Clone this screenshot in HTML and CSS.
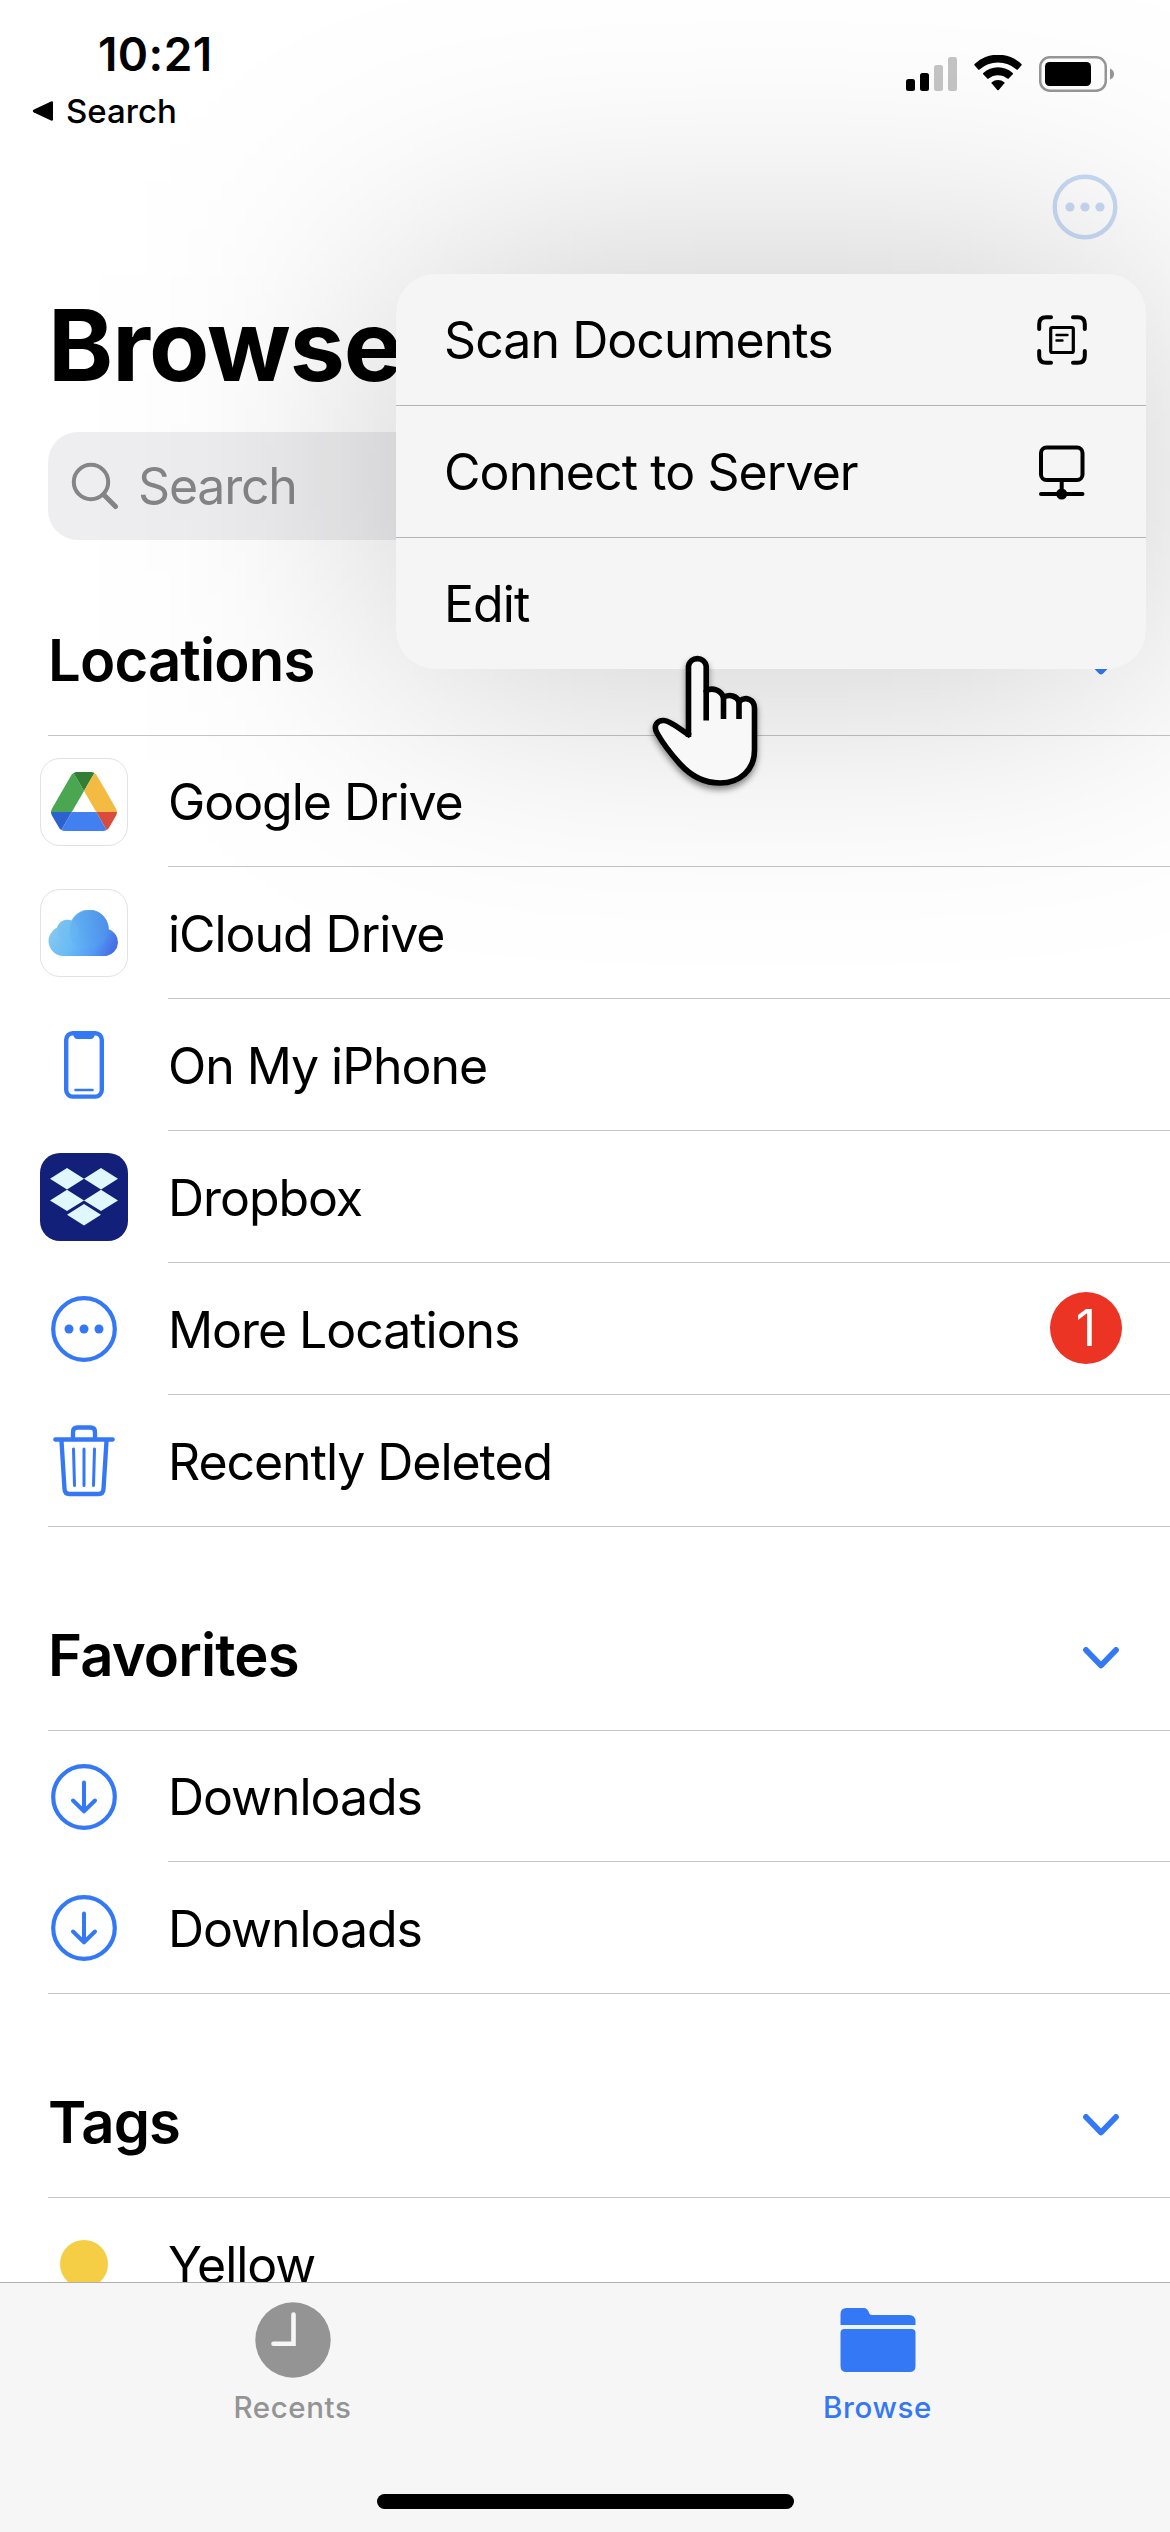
FILE: index.html
```html
<!DOCTYPE html>
<html lang="en">
<head>
<meta charset="UTF-8" />
<meta name="viewport" content="width=device-width, initial-scale=1.0" />
<title>Files - Browse</title>
<link rel="stylesheet" href="styles.css">
</head>
<body>

<div class="screen">
  <header class="status">
    <div class="status-left">
      <div class="time">10:21</div>
      <div class="back">
        <svg width="22" height="22" viewBox="0 0 22 22"><path d="M2 9.500 19 1.600q2-.8 2 1.200v16.400q0 2-2 1.200L2 12.500q-2.500-1.500 0-3z"/></svg>
        <span>Search</span>
      </div>
    </div>
    <div class="status-right">
      <svg class="signal" width="51" height="34" viewBox="0 0 51 34">
        <rect x="0" y="22" width="9" height="12" rx="2.500"/>
        <rect x="14" y="16" width="9" height="18" rx="2.500"/>
        <rect x="28" y="8" width="9" height="26" rx="2.500" fill="#c6c6c6"/>
        <rect x="42" y="0" width="9" height="34" rx="2.500" fill="#c6c6c6"/>
      </svg>
      <svg class="wifi" width="48" height="36" viewBox="0 0 48 36">
        <path d="M0.500 10.300Q0 9.600 .600 9A34 34 0 0 1 47.400 9Q48 9.600 47.500 10.300L43.800 14.600Q43.200 15.200 42.500 14.600A27.500 27.500 0 0 0 5.500 14.600Q4.800 15.200 4.200 14.600Z"/>
        <path d="M9.200 19.200Q8.700 18.600 9.300 18A21.500 21.500 0 0 1 38.700 18Q39.300 18.600 38.800 19.200L34.700 23.600Q34.100 24.200 33.400 23.600A14.500 14.500 0 0 0 14.600 23.600Q13.900 24.200 13.300 23.600Z"/>
        <path d="M17.600 28.300Q17.200 27.700 17.800 27.200A10 10 0 0 1 30.200 27.200Q30.800 27.700 30.400 28.300L24.700 35Q24 35.700 23.300 35Z"/>
      </svg>
      <svg class="battery" width="76" height="36" viewBox="0 0 76 36">
        <rect x="1.250" y="1.250" width="65.500" height="33.500" rx="9.500" fill="none" stroke="#979797" stroke-width="2.500"/>
        <rect x="6" y="6" width="46" height="24" rx="4.500"/>
        <path d="M71 12.500q4 1.500 4 5.500t-4 5.500z" fill="#979797"/>
      </svg>
    </div>
  </header>

  <nav class="navbar">
    <svg class="more" width="66" height="66" viewBox="0 0 66 66">
      <circle cx="33" cy="33" r="30.300" fill="none" stroke="currentColor" stroke-width="4.400"/>
      <g fill="currentColor"><circle cx="18" cy="33" r="4.600"/><circle cx="33" cy="33" r="4.600"/><circle cx="48" cy="33" r="4.600"/></g>
    </svg>
  </nav>

  <h1>Browse</h1>

  <div class="search">
    <svg width="48" height="48" viewBox="0 0 48 48" fill="none" stroke="currentColor" stroke-linecap="round">
      <circle cx="20" cy="20" r="17.200" stroke-width="4"/>
      <path d="M32.500 32.500 44.500 44.500" stroke-width="5"/>
    </svg>
    <span>Search</span>
  </div>

  <main class="content">
    <section>
      <div class="section-head first">
        <h2>Locations</h2>
        <svg class="chevron" width="36" height="22" viewBox="0 0 36 22"><path d="M3 3 18 18.500 33 3"/></svg>
      </div>
      <ul class="list">
        <li>
          <div class="icon">
            <div class="tile">
              <svg width="66" height="59" viewBox="0 0 87.300 78">
                <path d="m6.600 66.850 3.850 6.650c.8 1.400 1.950 2.500 3.300 3.300l13.750-23.800h-27.500c0 1.550.4 3.100 1.200 4.500z" fill="#2b62cf"/>
                <path d="m43.650 25-13.750-23.800c-1.350.8-2.500 1.900-3.300 3.300l-25.400 44a9.060 9.060 0 0 0-1.200 4.500h27.500z" fill="#4aa651"/>
                <path d="m73.550 76.800c1.350-.8 2.500-1.900 3.300-3.300l1.600-2.750 7.650-13.250c.8-1.400 1.200-2.950 1.200-4.500h-27.500z" fill="#d94c3d"/>
                <path d="m43.650 25 13.750-23.800c-1.350-.8-2.900-1.200-4.500-1.200h-18.500c-1.600 0-3.150.45-4.500 1.200z" fill="#317e36"/>
                <path d="m59.800 53h-32.300l-13.750 23.800c1.350.8 2.900 1.200 4.500 1.200h50.800c1.600 0 3.150-.45 4.500-1.200z" fill="#427ff0"/>
                <path d="m73.400 26.500-12.700-22c-.8-1.400-1.950-2.500-3.300-3.300l-13.750 23.800 16.150 28h27.450c0-1.550-.4-3.100-1.200-4.500z" fill="#f3bb42"/>
              </svg>
            </div>
          </div>
          <div class="label">Google Drive</div>
        </li>
        <li>
          <div class="icon">
            <div class="tile">
              <svg width="72" height="46" viewBox="0 0 72 46">
                <defs>
                  <linearGradient id="base" x1="0" y1="0.300" x2="1" y2="0.600"><stop offset="0" stop-color="#8acbf0"/><stop offset=".45" stop-color="#67b9f6"/><stop offset=".75" stop-color="#559bf2"/><stop offset="1" stop-color="#4670e6"/></linearGradient>
                  <linearGradient id="puff" x1="0" y1="1" x2="1" y2="0.300"><stop offset="0" stop-color="#67b9f6"/><stop offset=".5" stop-color="#539eed"/><stop offset="1" stop-color="#4a87e6"/></linearGradient>
                </defs>
                <path d="M15 46A15 15 0 0 1 9 17.500A11 11 0 0 1 23.500 10.500A19.500 19.500 0 0 1 60.500 19A14 14 0 0 1 58.500 46Z" fill="url(#base)"/>
                <path d="M22 20A19.500 19.500 0 0 1 61 19.500Q61 26 55 33Q40 42 28 36Q21 30 22 20Z" fill="url(#puff)" opacity=".6"/>
                <circle cx="20" cy="20" r="10.500" fill="#6dbdf0" opacity=".3"/>
              </svg>
            </div>
          </div>
          <div class="label">iCloud Drive</div>
        </li>
        <li>
          <div class="icon">
            <svg width="40" height="68" viewBox="0 0 40 68">
              <rect x="2.200" y="2.200" width="35.600" height="63.400" rx="6.500" fill="none" stroke="currentColor" stroke-width="4.400"/>
              <path d="M9 3h22q-1 5-4 5H13q-3 0-4-5z" fill="currentColor"/>
              <path d="M11.500 59h17" stroke="currentColor" stroke-width="2.600" stroke-linecap="round"/>
            </svg>
          </div>
          <div class="label">On My iPhone</div>
        </li>
        <li>
          <div class="icon">
            <div class="tile dropbox">
              <svg width="68" height="58" viewBox="0 0 68 58" fill="#e0f7fd">
                <path d="M17 0 34 10.700 17 21.400 0 10.700zM51 0 68 10.700 51 21.400 34 10.700zM17 21.700 34 32.400 17 43 0 32.400zM51 21.700 68 32.400 51 43 34 32.400zM34 36 51 46.700 34 57.400 17 46.700z"/>
              </svg>
            </div>
          </div>
          <div class="label">Dropbox</div>
        </li>
        <li>
          <div class="icon">
            <svg width="66" height="66" viewBox="0 0 66 66">
              <circle cx="33" cy="33" r="30.800" fill="none" stroke="currentColor" stroke-width="4.200"/>
              <g fill="currentColor"><circle cx="18" cy="33" r="4.500"/><circle cx="33" cy="33" r="4.500"/><circle cx="48" cy="33" r="4.500"/></g>
            </svg>
          </div>
          <div class="label">More Locations <span class="badge">1</span></div>
        </li>
        <li>
          <div class="icon">
            <svg width="62" height="72" viewBox="0 0 62 72" fill="none" stroke="currentColor" stroke-linecap="round" stroke-linejoin="round">
              <path d="M2.300 14.500h57.400M20 13V7q0-4.500 4.500-4.500h13Q42 2.500 42 7v6M8.500 16l3 48q.3 5 5 5h29q4.700 0 5-5l3-48" stroke-width="4.300"/>
              <path d="M20.500 24l1 36.500M31 24v36.500M41.500 24l-1 36.500" stroke-width="3"/>
            </svg>
          </div>
          <div class="label">Recently Deleted</div>
        </li>
      </ul>
    </section>

    <section>
      <div class="section-head">
        <h2>Favorites</h2>
        <svg class="chevron" width="36" height="22" viewBox="0 0 36 22"><path d="M3 3 18 18.500 33 3"/></svg>
      </div>
      <ul class="list">
        <li>
          <div class="icon">
            <svg width="66" height="66" viewBox="0 0 66 66" fill="none" stroke="currentColor" stroke-width="4.200" stroke-linecap="round" stroke-linejoin="round">
              <circle cx="33" cy="33" r="30.800"/><path d="M33 18.500V47M22 36.500 33 47.300 44 36.500" stroke-width="4"/>
            </svg>
          </div>
          <div class="label">Downloads</div>
        </li>
        <li>
          <div class="icon">
            <svg width="66" height="66" viewBox="0 0 66 66" fill="none" stroke="currentColor" stroke-width="4.200" stroke-linecap="round" stroke-linejoin="round">
              <circle cx="33" cy="33" r="30.800"/><path d="M33 18.500V47M22 36.500 33 47.300 44 36.500" stroke-width="4"/>
            </svg>
          </div>
          <div class="label">Downloads</div>
        </li>
      </ul>
    </section>

    <section>
      <div class="section-head">
        <h2>Tags</h2>
        <svg class="chevron" width="36" height="22" viewBox="0 0 36 22"><path d="M3 3 18 18.500 33 3"/></svg>
      </div>
      <ul class="list">
        <li>
          <div class="icon"><span class="dot"></span></div>
          <div class="label">Yellow</div>
        </li>
      </ul>
    </section>
  </main>

  <footer class="tabbar">
    <div class="tab">
      <svg width="76" height="76" viewBox="0 0 76 76"><circle cx="38" cy="38" r="37.700" fill="currentColor"/><path d="M38.500 12.500V41.800H18.500" fill="none" stroke="#f7f6f7" stroke-width="4.600" stroke-linecap="round"/></svg>
      <span>Recents</span>
    </div>
    <div class="tab active">
      <svg width="76" height="76" viewBox="0 0 76 76">
        <rect x="1" y="20" width="74" height="10" fill="#edf5fc"/>
        <path d="M.500 23V12q0-6 6-6H24q3 0 4.500 3.500 1 3.500 3.500 3.500h37q6.500 0 6.500 6.500V23zM.500 31q0-4 4-4h67q4 0 4 4v33q0 6-6 6h-63q-6 0-6-6z" fill="currentColor"/>
      </svg>
      <span>Browse</span>
    </div>
    <div class="home"></div>
  </footer>

  <!-- context menu -->
  <div class="menu-shadow"></div>
  <div class="menu">
    <div class="menu-item">
      <span>Scan Documents</span>
      <svg width="50" height="50" viewBox="0 0 50 50" fill="none" stroke="#000" stroke-linecap="round" stroke-linejoin="round">
        <path d="M2.200 14V9Q2.200 2.200 9 2.200h5M36 2.200h5q6.800 0 6.800 6.800v5M47.800 36v5q0 6.800-6.800 6.800h-5M14 47.800H9Q2.200 47.800 2.200 41v-5" stroke-width="4"/>
        <rect x="13.700" y="12.500" width="22.600" height="25" rx="1.500" stroke-width="3.200"/>
        <path d="M19.500 20h11M19.500 25.500h6" stroke-width="2.400"/>
      </svg>
    </div>
    <div class="menu-item">
      <span>Connect to Server</span>
      <svg width="50" height="56" viewBox="0 0 50 56" fill="none" stroke="#000" stroke-width="4" stroke-linecap="round">
        <rect x="4" y="3.500" width="41.500" height="32.500" rx="5.500"/>
        <path d="M24.700 37v12M4 50h41.500"/>
        <circle cx="24.700" cy="50" r="5.500" fill="#000" stroke="none"/>
      </svg>
    </div>
    <div class="menu-item">
      <span>Edit</span>
    </div>
  </div>

  <svg class="cursor" width="140" height="170" viewBox="0 0 140 170">
    <path d="M48.500 97V26a9 9 0 0 1 17.700 0V51C72 47 81 50 83.500 57.500 89 53.500 97 56 99 61.500 106 55.500 114.500 60 114.500 68V110C114.500 130 100 143 80 143 64 143 50 135 40 124 31 114 22 102 17 93 13 86 17 80 24 80.500 31 81 38 88 50.500 96" fill="#f8f8f8"/>
    <path d="M66.200 50V80.500M83.500 56V79M99 61V79" fill="none"/>
  </svg>
</div>

</body>
</html>
```
FILE: styles.css
```css
* { box-sizing: border-box; }
body { margin: 0; background: #fff; font-family: Inter, "Liberation Sans", sans-serif; color: #000; }
svg { display: block; flex-shrink: 0; }
h1, h2, ul { margin: 0; padding: 0; font-weight: inherit; }

.screen { position: relative; width: 1170px; height: 2532px; display: flex; flex-direction: column; overflow: hidden; background: #fff; }

/* status bar */
.status { height: 141px; display: flex; justify-content: space-between; padding: 28px 55px 0 32px; }
.time { font-size: 46px; font-weight: 600; line-height: 52px; padding-left: 66px; letter-spacing: 0.4px; }
.back { display: flex; align-items: center; gap: 12px; height: 40px; margin-top: 11px; font-size: 33px; font-weight: 500; }
.back svg { margin-bottom: 1px; }
.status-right { display: flex; align-items: flex-end; height: 63px; }
.wifi { margin-left: 17px; }
.battery { margin: 0 0 -1px 17px; }

.navbar { height: 133px; display: flex; justify-content: flex-end; padding: 33px 52px 0 0; color: #c9dcf6; }

h1 { height: 158px; padding: 13px 0 0 48px; font-size: 98.5px; font-weight: 700; line-height: 118px; letter-spacing: -1px; }

.search { display: flex; align-items: center; gap: 19px; height: 108px; margin: 0 48px; padding-left: 23px; border-radius: 30px; background: #eeeef0; color: #858588; font-size: 50px; letter-spacing: -1.2px; }

/* file lists */
.content { flex: 1; min-height: 0; overflow: hidden; }
.section-head { display: flex; align-items: center; justify-content: space-between; height: 204px; margin-left: 48px; padding: 52px 51px 0 0; border-bottom: 1px solid #c5c5c7; }
.section-head.first { height: 196px; padding-top: 45px; }
.section-head h2 { font-size: 58px; font-weight: 600; letter-spacing: -0.85px; }
.chevron { margin-top: 7px; fill: none; stroke: #3478f6; stroke-width: 5.8; stroke-linecap: round; stroke-linejoin: round; }
.list { list-style: none; margin-left: 48px; border-bottom: 1px solid #c5c5c7; }
.list li { display: flex; height: 132px; }
.list li:first-child { height: 131px; }
.list li:last-child { height: 131px; }
.icon { width: 72px; margin-right: 48px; display: flex; align-items: center; justify-content: center; color: #3478f6; flex-shrink: 0; }
.label { flex: 1; display: flex; align-items: center; justify-content: space-between; padding: 2px 48px 0 0; font-size: 50px; letter-spacing: -1.05px; border-bottom: 1px solid #c5c5c7; }
.list li:last-child .label { border-bottom: none; }
.tile { display: flex; align-items: center; justify-content: center; width: 88px; height: 88px; border: 1px solid #e2e2e2; border-radius: 20px; background: #fff; flex-shrink: 0; }
.dropbox { border: none; background: #12207a; }
.badge { width: 72px; height: 72px; margin-top: -3px; border-radius: 50%; background: #eb3424; color: #fff; text-align: center; line-height: 72px; letter-spacing: 0; }
.dot { width: 48px; height: 48px; border-radius: 50%; background: #f6ce46; }

/* tab bar */
.tabbar { height: 250px; display: grid; grid-template-columns: 1fr 1fr; grid-template-rows: 211px 1fr; border-top: 1px solid #b0b0b0; background: #f6f6f7; }
.tab { display: flex; flex-direction: column; align-items: center; padding-top: 19px; color: #949494; font-size: 29.5px; font-weight: 500; }
.tab span { line-height: 36px; margin-top: 11px; letter-spacing: 0.6px; }
.tab.active { color: #3478f6; }
.home { grid-column: 1 / 3; justify-self: center; width: 417px; height: 15px; border-radius: 8px; background: #000; }

/* overlays */
.menu-shadow { position: absolute; left: 396px; top: 274px; width: 750px; height: 395px; background: rgba(0,0,0,0.22); filter: blur(140px); }
.menu { position: absolute; left: 396px; top: 274px; width: 750px; height: 395px; border-radius: 39px; background: #f5f5f5; }
.menu-item { display: flex; align-items: center; justify-content: space-between; height: 132px; padding: 1px 59px 0 48px; font-size: 50px; letter-spacing: -0.93px; border-bottom: 1px solid #b4b4b6; }
.menu-item:last-child { border-bottom: none; height: 131px; }
.cursor { position: absolute; left: 640px; top: 640px; stroke: #000; stroke-width: 5.6; stroke-linejoin: round; filter: drop-shadow(0 4px 3px rgba(0,0,0,0.45)); }
```
